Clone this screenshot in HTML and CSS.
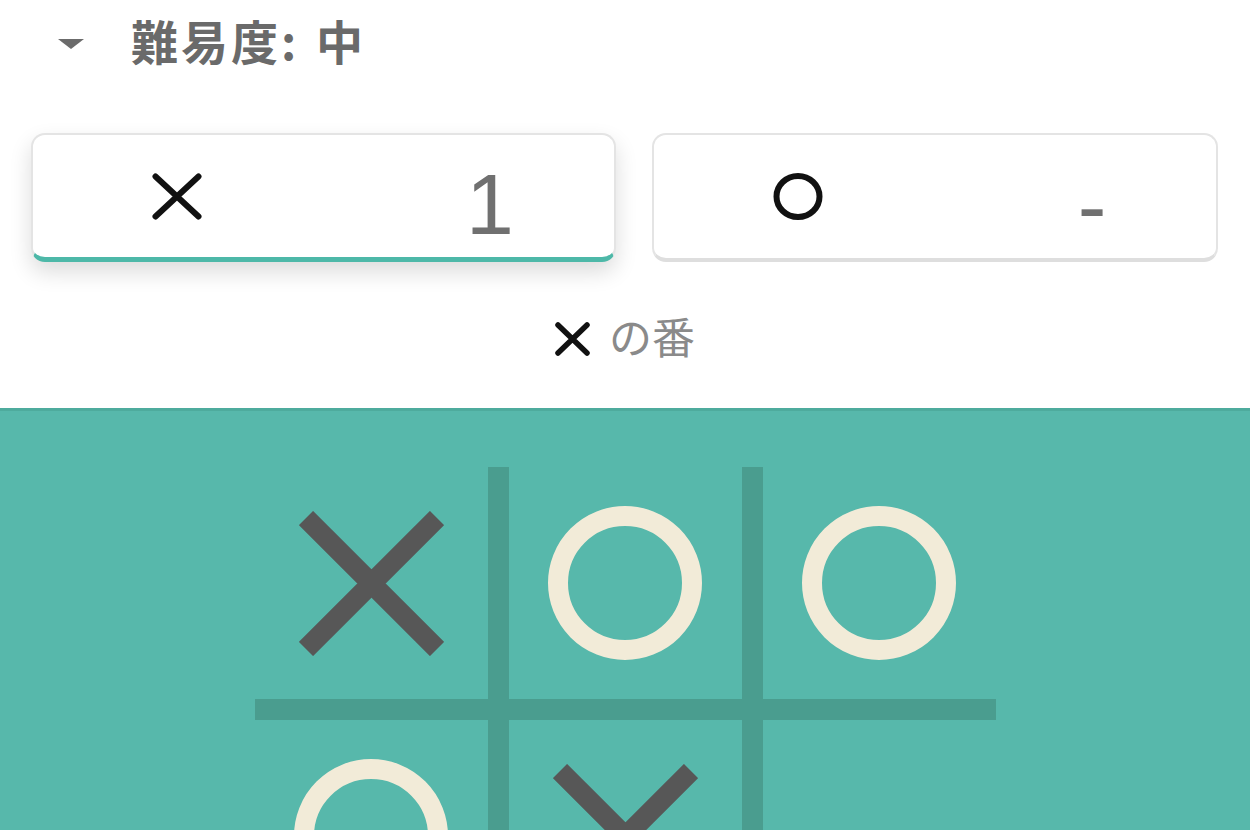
FILE: index.html
```html
<!DOCTYPE html>
<html lang="ja">
<head>
  <meta charset="UTF-8" />
  <meta name="viewport" content="width=device-width, initial-scale=1.0"/>
  <title>三目並べ</title>
  <link rel="stylesheet" href="styles.css">
</head>
<body>
  <header class="level">
    <span class="caret"></span>
    <h1 class="level-title">難易度: 中</h1>
  </header>

  <div class="players">
    <div class="player active">
      <svg class="mark" width="50" height="47" viewBox="0 0 50 47">
        <path d="M3.5 3.5 L46.5 43.5 M46.5 3.5 L3.5 43.5" stroke="#111" stroke-width="6" stroke-linecap="round" fill="none"/>
      </svg>
      <span class="score">1</span>
    </div>
    <div class="player">
      <svg class="mark" width="50" height="47" viewBox="0 0 50 47">
        <ellipse cx="25" cy="23.5" rx="21.5" ry="20.5" stroke="#111" stroke-width="6" fill="none"/>
      </svg>
      <span class="score">-</span>
    </div>
  </div>

  <div class="turn">
    <svg width="35" height="34" viewBox="0 0 35 34">
      <path d="M3 3 L32 31 M32 3 L3 31" stroke="#111" stroke-width="5.5" stroke-linecap="round" fill="none"/>
    </svg>
    <span class="turn-text">の番</span>
  </div>

  <main class="board-area">
    <div class="board">
      <div class="cell">
        <svg width="145" height="145" viewBox="0 0 145 145">
          <path d="M7 7 L138 138 M138 7 L7 138" stroke="#575757" stroke-width="20" fill="none"/>
        </svg>
      </div>
      <div class="cell">
        <svg width="154" height="154" viewBox="0 0 154 154">
          <circle cx="77" cy="77" r="67" stroke="#f2ebd8" stroke-width="20" fill="none"/>
        </svg>
      </div>
      <div class="cell">
        <svg width="154" height="154" viewBox="0 0 154 154">
          <circle cx="77" cy="77" r="67" stroke="#f2ebd8" stroke-width="20" fill="none"/>
        </svg>
      </div>
      <div class="cell">
        <svg width="154" height="154" viewBox="0 0 154 154">
          <circle cx="77" cy="77" r="67" stroke="#f2ebd8" stroke-width="20" fill="none"/>
        </svg>
      </div>
      <div class="cell">
        <svg width="145" height="145" viewBox="0 0 145 145">
          <path d="M7 7 L138 138 M138 7 L7 138" stroke="#575757" stroke-width="20" fill="none"/>
        </svg>
      </div>
      <div class="cell"></div>
      <div class="cell"></div>
      <div class="cell"></div>
      <div class="cell"></div>
    </div>
  </main>
</body>
</html>
```

FILE: styles.css
```css
* {
  box-sizing: border-box;
  margin: 0;
  padding: 0;
}

body {
  font-family: 'Noto Sans CJK JP', sans-serif;
  background-color: #fff;
  min-height: 100vh;
  display: flex;
  flex-direction: column;
  overflow: hidden;
}

.level {
  display: flex;
  align-items: center;
  height: 88px;
  padding-left: 58px;
  padding-bottom: 10px;
}

.caret {
  width: 0;
  height: 0;
  border-left: 13px solid transparent;
  border-right: 13px solid transparent;
  border-top: 10px solid #6b6b6b;
  margin-right: 47px;
  margin-top: 10px;
}

.level-title {
  font-size: 47px;
  font-weight: 700;
  line-height: 1;
  color: #6a6a6a;
  letter-spacing: 3px;
  word-spacing: 3px;
}

.players {
  display: grid;
  grid-template-columns: 585px 566px;
  column-gap: 36px;
  padding: 0 31px;
  margin-top: 45px;
}

.player {
  display: flex;
  align-items: center;
  justify-content: space-between;
  height: 129px;
  padding: 0 84px 0 119px;
  background: #fff;
  border: 2px solid #e4e4e4;
  border-bottom: 4px solid #dedede;
  border-radius: 14px;
}

.player.active {
  border-bottom: 5px solid #4db8a8;
  box-shadow: 0 10px 22px rgba(0, 0, 0, 0.14);
}

.score {
  width: 80px;
  margin-top: 16px;
  text-align: center;
  font-family: 'Liberation Sans', Arial, sans-serif;
  font-size: 86px;
  line-height: 1;
  color: #707070;
}

.turn {
  display: flex;
  justify-content: center;
  align-items: center;
  gap: 19px;
  height: 76px;
  margin-top: 39px;
}

.turn-text {
  font-size: 43px;
  line-height: 1;
  color: #8a8a8a;
  margin-bottom: 7px;
}

.board-area {
  flex: 1;
  margin-top: 31px;
  background-color: #57b8ab;
  border-top: 3px solid #4eab9d;
  padding-top: 56px;
  display: flex;
  justify-content: center;
}

.board {
  display: grid;
  grid-template-columns: repeat(3, 233px);
  grid-template-rows: repeat(3, 232px);
  gap: 21px;
  background-color: #4a9d8f;
  align-self: flex-start;
}

.cell {
  background-color: #57b8ab;
  display: flex;
  justify-content: center;
  align-items: center;
}
```
